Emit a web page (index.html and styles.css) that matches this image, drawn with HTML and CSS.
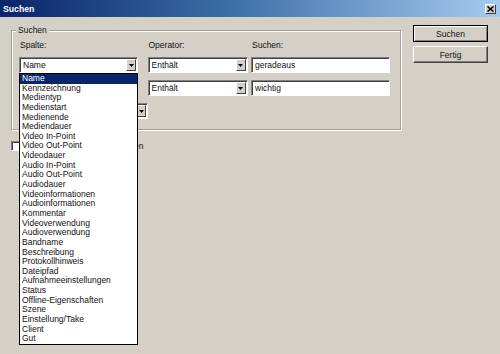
FILE: index.html
```html
<!DOCTYPE html>
<html lang="de">
<head>
<meta charset="utf-8">
<title>Suchen</title>
<link rel="stylesheet" href="styles.css">
</head>
<body>
<div class="window">
  <div class="titlebar">
    <span class="title">Suchen</span>
    <span class="close">
      <svg width="7" height="6" viewBox="0 0 7 6"><path d="M0.5 0.5 L6.5 5.5 M6.5 0.5 L0.5 5.5" stroke="#000" stroke-width="1.6" fill="none"/></svg>
    </span>
  </div>
  <div class="client">
    <div class="left">
      <div class="group">
        <span class="legend">Suchen</span>
        <div class="grid">
          <div class="lbl">Spalte:</div>
          <div class="lbl">Operator:</div>
          <div class="lbl">Suchen:</div>

          <div class="combo c1">
            <span class="val">Name</span>
            <span class="dd"><svg width="5" height="3" viewBox="0 0 5 3"><path d="M0 0 H5 L2.5 3 Z" fill="#000"/></svg></span>
            <ul class="droplist">
              <li class="sel">Name</li>
              <li>Kennzeichnung</li>
              <li>Medientyp</li>
              <li>Medienstart</li>
              <li>Medienende</li>
              <li>Mediendauer</li>
              <li>Video In-Point</li>
              <li>Video Out-Point</li>
              <li>Videodauer</li>
              <li>Audio In-Point</li>
              <li>Audio Out-Point</li>
              <li>Audiodauer</li>
              <li>Videoinformationen</li>
              <li>Audioinformationen</li>
              <li>Kommentar</li>
              <li>Videoverwendung</li>
              <li>Audioverwendung</li>
              <li>Bandname</li>
              <li>Beschreibung</li>
              <li>Protokollhinweis</li>
              <li>Dateipfad</li>
              <li>Aufnahmeeinstellungen</li>
              <li>Status</li>
              <li>Offline-Eigenschaften</li>
              <li>Szene</li>
              <li>Einstellung/Take</li>
              <li>Client</li>
              <li>Gut</li>
            </ul>
          </div>
          <div class="combo c2">
            <span class="val">Enthält</span>
            <span class="dd"><svg width="5" height="3" viewBox="0 0 5 3"><path d="M0 0 H5 L2.5 3 Z" fill="#000"/></svg></span>
          </div>
          <div class="field"><span class="val">geradeaus</span></div>

          <div class="combo c1">
            <span class="val">Name</span>
            <span class="dd"><svg width="5" height="3" viewBox="0 0 5 3"><path d="M0 0 H5 L2.5 3 Z" fill="#000"/></svg></span>
          </div>
          <div class="combo c2">
            <span class="val">Enthält</span>
            <span class="dd"><svg width="5" height="3" viewBox="0 0 5 3"><path d="M0 0 H5 L2.5 3 Z" fill="#000"/></svg></span>
          </div>
          <div class="field"><span class="val">wichtig</span></div>

          <div class="matchrow">
            <span class="mlbl">Übereinstimmung:</span>
            <div class="combo c3">
              <span class="val">Alle</span>
              <span class="dd"><svg width="5" height="3" viewBox="0 0 5 3"><path d="M0 0 H5 L2.5 3 Z" fill="#000"/></svg></span>
            </div>
          </div>
        </div>
      </div>
      <div class="check">
        <span class="box"></span>
        <span class="clbl">Groß-/Kleinschreibung beachten</span>
      </div>
    </div>
    <div class="right">
      <div class="push default">Suchen</div>
      <div class="push">Fertig</div>
    </div>
  </div>
</div>
</body>
</html>
```
FILE: styles.css
```css
html, body {
  margin: 0;
  padding: 0;
}
body {
  font-family: "Liberation Sans", Arial, sans-serif;
  font-size: 8.5px;
  color: #111;
  background: #d4d0c8;
}
.window {
  width: 500px;
  height: 354px;
  background: #d4d0c8;
  display: flex;
  flex-direction: column;
  overflow: hidden;
}
.titlebar {
  height: 17px;
  flex: none;
  background: linear-gradient(to right, #0a246a 0%, #3a6ea5 45%, #a6caf0 100%);
  display: flex;
  align-items: center;
  justify-content: space-between;
  padding: 0 4px 0 3px;
}
.title {
  color: #fff;
  font-weight: bold;
  font-size: 8.7px;
}
.close {
  width: 11px;
  height: 10px;
  box-sizing: border-box;
  background: #d4d0c8;
  border: 1px solid;
  border-color: #fff #404040 #404040 #fff;
  display: flex;
  align-items: center;
  justify-content: center;
}
.client {
  display: flex;
  padding: 8px 0 0 11px;
}
.left {
  margin-top: 5px;
  display: flex;
  flex-direction: column;
}
.group {
  position: relative;
  width: 390px;
  height: 100px;
  box-sizing: border-box;
  border: 1px solid #a39f98;
  box-shadow: 1px 1px 0 #fff, inset 1px 1px 0 #fff;
  padding: 10px 0 0 7px;
}
.legend {
  position: absolute;
  left: 4px;
  top: -6px;
  padding: 0 2px;
  background: #d4d0c8;
  line-height: 10px;
}
.grid {
  display: grid;
  grid-template-columns: 128.5px 103.5px 139px;
  grid-template-rows: 9px 16px 16px 16px;
  row-gap: 7px;
}
.lbl {
  line-height: 9px;
  padding-left: 1px;
}
.combo, .field {
  position: relative;
  height: 16px;
  box-sizing: border-box;
  background: #fff;
  border: 1px solid;
  border-color: #808080 #fff #fff #808080;
  box-shadow: inset 1px 1px 0 #404040;
  display: flex;
  align-items: center;
}
.c1 { width: 119px; }
.c2 { width: 100px; }
.field { width: 139px; }
.c3 { width: 48px; }
.val {
  flex: 1;
  padding-left: 3px;
  line-height: 14px;
  white-space: nowrap;
}
.dd {
  width: 10px;
  height: 12px;
  margin-right: 1px;
  box-sizing: border-box;
  background: #d4d0c8;
  border: 1px solid;
  border-color: #fff #404040 #404040 #fff;
  display: flex;
  align-items: center;
  justify-content: center;
}
.droplist {
  position: absolute;
  left: -1px;
  top: 15px;
  width: 119px;
  box-sizing: border-box;
  margin: 0;
  padding: 0;
  list-style: none;
  background: #fff;
  border: 1px solid #000;
  z-index: 10;
}
.droplist li {
  height: 9.65px;
  line-height: 9.65px;
  padding-left: 2px;
  white-space: nowrap;
}
.droplist li.sel {
  background: #0a246a;
  color: #fff;
}
.matchrow {
  grid-column: 1 / span 2;
  display: flex;
  align-items: center;
}
.mlbl {
  width: 80px;
  padding-left: 1px;
}
.check {
  display: flex;
  align-items: center;
  margin-top: 11px;
  height: 10px;
}
.box {
  width: 10px;
  height: 10px;
  box-sizing: border-box;
  background: #fff;
  border: 1px solid;
  border-color: #808080 #fff #fff #808080;
  box-shadow: inset 1px 1px 0 #404040;
}
.clbl {
  margin-left: 0;
}
.right {
  margin-left: 12px;
  display: flex;
  flex-direction: column;
  gap: 4px;
}
.push {
  width: 75px;
  height: 17px;
  box-sizing: border-box;
  background: #d4d0c8;
  border: 1px solid;
  border-color: #fff #404040 #404040 #fff;
  box-shadow: inset -1px -1px 0 #808080;
  display: flex;
  align-items: center;
  justify-content: center;
}
.push.default {
  border-color: #000;
  box-shadow: inset 1px 1px 0 #fff, inset -1px -1px 0 #808080;
}
```
